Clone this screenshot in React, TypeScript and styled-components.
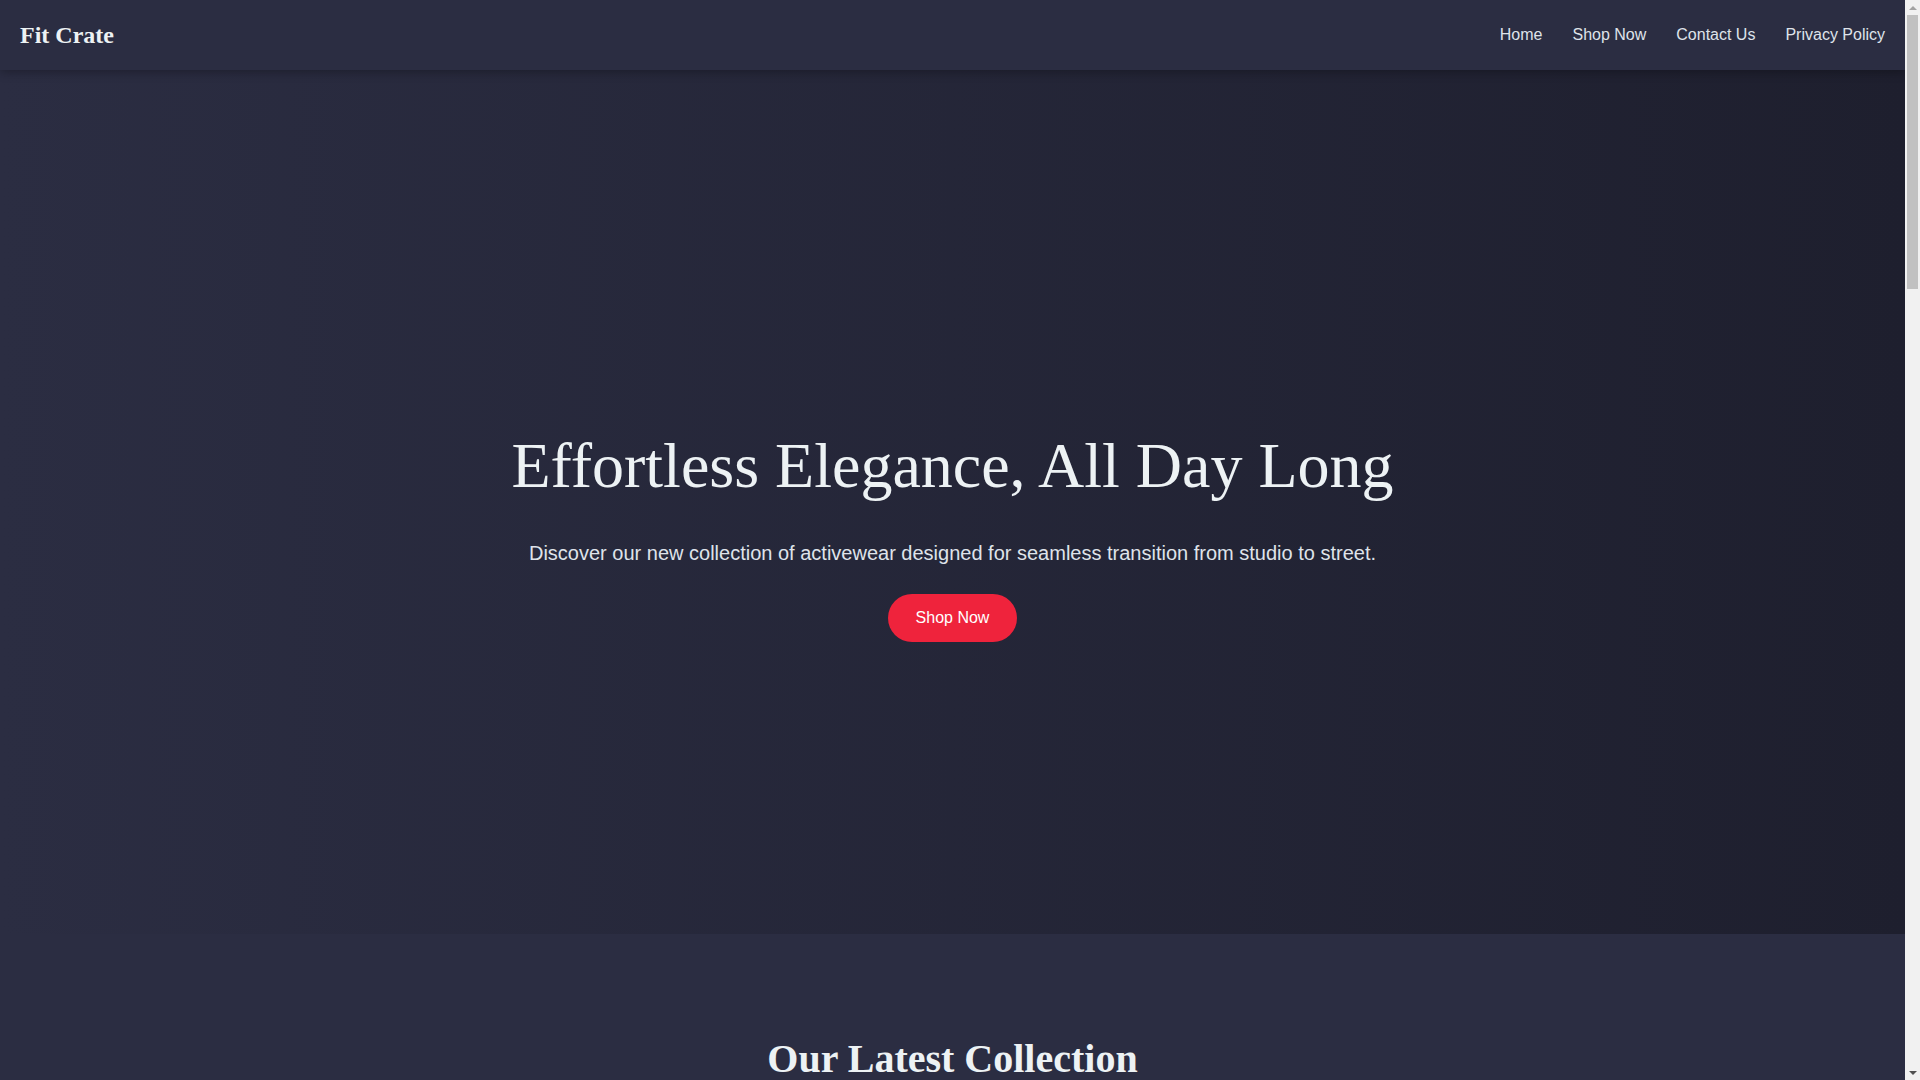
import React from 'react';
import styled, { createGlobalStyle } from 'styled-components';

const Colors = {
  DARK: '#2b2d42',
  DARKER: '#1d1e2c',
  LIGHT: '#edf2f4',
  GREY: '#8d99ae',
  RED: '#ef233c',
};

const products = [
  { name: 'Seamless Sculpt Legging', price: '$68.00', tone: '#3a3d58' },
  { name: 'Flow Rib Sports Bra', price: '$48.00', tone: '#44475f' },
  { name: 'Studio Wrap Hoodie', price: '$92.00', tone: '#363950' },
  { name: 'Align Jogger', price: '$78.00', tone: '#3f4259' },
  { name: 'Everyday Crop Tee', price: '$38.00', tone: '#3a3c53' },
  { name: 'Motion Bike Short', price: '$44.00', tone: '#474a63' },
  { name: 'Street Light Jacket', price: '$118.00', tone: '#34364c' },
  { name: 'Breeze Tank', price: '$34.00', tone: '#40435b' },
  { name: 'Core Flare Pant', price: '$82.00', tone: '#393b52' },
];

const features = [
  { title: 'Free Shipping', text: 'On every order over $75, delivered to your door.' },
  { title: 'Easy Returns', text: 'Not the right fit? Send it back within 30 days.' },
  { title: 'Sustainable Fabrics', text: 'Made from recycled and responsibly sourced yarns.' },
];

// browser-style scrollbar shown at the right edge of the window
const ScrollBar: React.FC = () => (
  <Rail>
    <RailButton>
      <Arrow $dir="up" />
    </RailButton>
    <Track>
      <Thumb />
    </Track>
    <RailButton>
      <Arrow $dir="down" />
    </RailButton>
  </Rail>
);

export default function App() {
  return (
    <>
      <GlobalStyle />
      <ScrollBar />
      <Page>
        <Nav>
          <Logo href="#">Fit Crate</Logo>
          <NavLinks>
            <NavLink href="#">Home</NavLink>
            <NavLink href="#">Shop Now</NavLink>
            <NavLink href="#">Contact Us</NavLink>
            <NavLink href="#">Privacy Policy</NavLink>
          </NavLinks>
        </Nav>

        <Hero>
          <HeroTitle>Effortless Elegance, All Day Long</HeroTitle>
          <HeroText>
            Discover our new collection of activewear designed for seamless transition from studio to street.
          </HeroText>
          <ShopButton href="#">Shop Now</ShopButton>
        </Hero>

        <Collection>
          <SectionTitle>Our Latest Collection</SectionTitle>
          <ProductGrid>
            {products.map((p) => (
              <ProductCard key={p.name}>
                <ProductImage $tone={p.tone} />
                <ProductInfo>
                  <ProductName>{p.name}</ProductName>
                  <ProductPrice>{p.price}</ProductPrice>
                </ProductInfo>
              </ProductCard>
            ))}
          </ProductGrid>
        </Collection>

        <Features>
          <SectionTitle>Why Fit Crate</SectionTitle>
          <FeatureRow>
            {features.map((f) => (
              <Feature key={f.title}>
                <FeatureTitle>{f.title}</FeatureTitle>
                <FeatureText>{f.text}</FeatureText>
              </Feature>
            ))}
          </FeatureRow>
        </Features>

        <Newsletter>
          <SectionTitle>Join the Crate</SectionTitle>
          <FeatureText>Sign up for early access to new drops and members-only offers.</FeatureText>
          <SignupForm>
            <EmailInput type="email" placeholder="Your email address" />
            <ShopButton as="button" type="button">Subscribe</ShopButton>
          </SignupForm>
        </Newsletter>

        <Footer>
          <FooterLinks>
            <NavLink href="#">Home</NavLink>
            <NavLink href="#">Shop Now</NavLink>
            <NavLink href="#">Contact Us</NavLink>
            <NavLink href="#">Privacy Policy</NavLink>
          </FooterLinks>
          <Copyright>&copy; 2024 Fit Crate. All rights reserved.</Copyright>
        </Footer>
      </Page>
    </>
  );
}

/*
 * Styles
 */

const GlobalStyle = createGlobalStyle`
  * {
    box-sizing: border-box;
  }
  body {
    margin: 0;
    background-color: ${Colors.DARK};
    color: ${Colors.LIGHT};
    font-family: 'Liberation Sans', Arial, sans-serif;
  }
`;

const Rail = styled.div`
  position: fixed;
  top: 0;
  right: 0;
  bottom: 0;
  z-index: 100;
  width: 15px;
  display: flex;
  flex-direction: column;
  background-color: #f1f1f1;
`;

const RailButton = styled.div`
  height: 15px;
  display: flex;
  align-items: center;
  justify-content: center;
`;

const Arrow = styled.div<{ $dir: 'up' | 'down' }>`
  width: 0;
  height: 0;
  border-left: 4px solid transparent;
  border-right: 4px solid transparent;
  ${(p) =>
    p.$dir === 'up'
      ? 'border-bottom: 4px solid #a3a3a3;'
      : 'border-top: 4px solid #505050;'}
`;

const Track = styled.div`
  flex: 1;
  padding: 0 2px;
`;

const Thumb = styled.div`
  height: 274px;
  background-color: #c1c1c1;
`;

const Page = styled.div`
  margin-right: 15px;
`;

const Nav = styled.nav`
  position: relative;
  z-index: 10;
  height: 70px;
  padding: 0 20px;
  display: flex;
  align-items: center;
  justify-content: space-between;
  background-color: ${Colors.DARK};
  box-shadow: 0 2px 10px rgba(0, 0, 0, 0.3);
`;

const Logo = styled.a`
  font-family: 'Liberation Serif', 'Times New Roman', serif;
  font-size: 24px;
  font-weight: 700;
  color: ${Colors.LIGHT};
  text-decoration: none;
`;

const NavLinks = styled.div`
  display: flex;
  gap: 30px;
`;

const NavLink = styled.a`
  font-size: 16px;
  color: #dfe3ea;
  text-decoration: none;
`;

const Hero = styled.section`
  height: 864px;
  padding: 66px 20px 0;
  display: flex;
  flex-direction: column;
  align-items: center;
  justify-content: center;
  text-align: center;
  background: linear-gradient(90deg, #2b2d42 0%, #1e1f2e 100%);
`;

const HeroTitle = styled.h1`
  margin: 0 0 39px;
  font-family: 'Liberation Serif', 'Times New Roman', serif;
  font-size: 64px;
  font-weight: 400;
  line-height: normal;
  color: ${Colors.LIGHT};
`;

const HeroText = styled.p`
  margin: 0 0 29px;
  font-size: 20px;
  color: #dfe3ea;
`;

const ShopButton = styled.a`
  display: inline-block;
  padding: 15px 28px;
  border: none;
  border-radius: 50px;
  background-color: ${Colors.RED};
  color: #ffffff;
  font-family: 'Liberation Sans', Arial, sans-serif;
  font-size: 16px;
  text-decoration: none;
  cursor: pointer;
`;

const Collection = styled.section`
  padding: 101px 40px 100px;
  background-color: ${Colors.DARK};
  text-align: center;
`;

const SectionTitle = styled.h2`
  margin: 0 0 50px;
  font-family: 'Liberation Serif', 'Times New Roman', serif;
  font-size: 40px;
  font-weight: 700;
  line-height: normal;
  color: ${Colors.LIGHT};
`;

const ProductGrid = styled.div`
  max-width: 1200px;
  margin: 0 auto;
  display: grid;
  grid-template-columns: repeat(3, 1fr);
  gap: 30px;
`;

const ProductCard = styled.div`
  border-radius: 10px;
  overflow: hidden;
  background-color: ${Colors.DARKER};
  box-shadow: 0 4px 14px rgba(0, 0, 0, 0.25);
`;

const ProductImage = styled.div<{ $tone: string }>`
  height: 360px;
  background: linear-gradient(160deg, ${(p) => p.$tone}, ${Colors.DARKER});
`;

const ProductInfo = styled.div`
  padding: 20px;
  display: flex;
  flex-direction: column;
  gap: 8px;
`;

const ProductName = styled.h3`
  margin: 0;
  font-family: 'Liberation Serif', 'Times New Roman', serif;
  font-size: 22px;
  font-weight: 400;
`;

const ProductPrice = styled.span`
  font-size: 16px;
  color: ${Colors.RED};
`;

const Features = styled.section`
  padding: 100px 40px;
  background: linear-gradient(90deg, #2b2d42 0%, #1e1f2e 100%);
  text-align: center;
`;

const FeatureRow = styled.div`
  max-width: 1200px;
  margin: 0 auto;
  display: grid;
  grid-template-columns: repeat(3, 1fr);
  gap: 30px;
`;

const Feature = styled.div`
  min-height: 260px;
  padding: 40px 30px;
  border-radius: 10px;
  background-color: ${Colors.DARK};
`;

const FeatureTitle = styled.h3`
  margin: 0 0 16px;
  font-family: 'Liberation Serif', 'Times New Roman', serif;
  font-size: 26px;
`;

const FeatureText = styled.p`
  margin: 0;
  font-size: 18px;
  color: ${Colors.GREY};
  line-height: 1.6;
`;

const Newsletter = styled.section`
  padding: 120px 40px;
  text-align: center;
  background-color: ${Colors.DARK};
`;

const SignupForm = styled.div`
  margin-top: 40px;
  display: flex;
  justify-content: center;
  gap: 12px;
`;

const EmailInput = styled.input`
  width: 360px;
  padding: 15px 24px;
  border: 1px solid ${Colors.GREY};
  border-radius: 50px;
  background-color: transparent;
  color: ${Colors.LIGHT};
  font-size: 16px;
  font-family: 'Liberation Sans', Arial, sans-serif;
  ::placeholder {
    color: ${Colors.GREY};
  }
`;

const Footer = styled.footer`
  min-height: 440px;
  padding: 80px 20px;
  display: flex;
  flex-direction: column;
  align-items: center;
  justify-content: center;
  gap: 24px;
  background-color: ${Colors.DARKER};
`;

const FooterLinks = styled.div`
  display: flex;
  gap: 30px;
`;

const Copyright = styled.p`
  margin: 0;
  font-size: 14px;
  color: ${Colors.GREY};
`;
